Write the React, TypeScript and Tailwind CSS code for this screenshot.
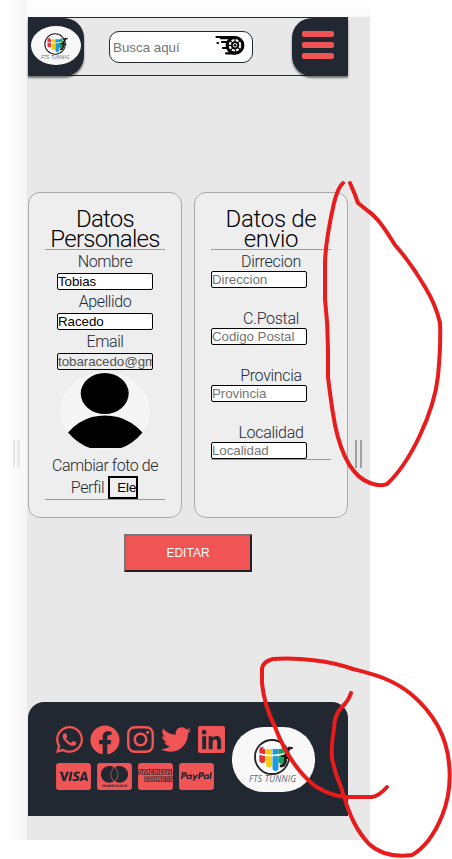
import React from "react";
import {
  FaWhatsapp,
  FaFacebook,
  FaInstagram,
  FaTwitter,
  FaLinkedin,
  FaCcVisa,
  FaCcMastercard,
  FaCcAmex,
  FaCcPaypal,
} from "react-icons/fa";

function LogoMark({ className }: { className: string }) {
  return (
    <svg viewBox="0 0 83 65" preserveAspectRatio="none" className={className}>
      <circle cx="40" cy="30" r="17" fill="#fff" stroke="#222" strokeWidth="1.8" />
      <g strokeWidth="6" strokeLinecap="round">
        <path d="M30.300 23v10" stroke="#e8303a" />
        <path d="M37 23v14.500" stroke="#f7cb15" />
        <path d="M43.500 23v18" stroke="#1e9be0" />
        <path d="M49.500 23v11" stroke="#17a05a" />
      </g>
      <path d="M31 22q1-3.500 5-3.500h9q5 0 5 3.500z" fill="#f3f8f8" />
      <path d="M27 27q12 3 25 0" stroke="#fff" strokeWidth="1.3" fill="none" />
      <path d="M57.500 21l-4 7v6q-1 5-4.500 5" stroke="#1b1b1b" strokeWidth="2.800" fill="none" strokeLinecap="round" />
      <path d="M50 29h5M54 22l6-1M54 31h4" stroke="#1b1b1b" strokeWidth="2.200" strokeLinecap="round" />
      <text x="40.500" y="55" textAnchor="middle" textLength="47" fontFamily="Open Sans, sans-serif" fontSize="8.500" fontStyle="italic" fill="#5b697b">
        FTS TUNNIG
      </text>
    </svg>
  );
}

function WheelIcon() {
  return (
    <svg viewBox="0 0 30 20" className="h-5 w-[30px]" fill="none" stroke="#000">
      <path d="M1.500 2h19M7 7h7M2.500 8h.5M8 13h6M11 18.300h9" strokeWidth="2.200" strokeLinecap="round" />
      <path d="M5 3.500h14" strokeWidth="1.500" />
      <circle cx="20" cy="10.300" r="8.300" strokeWidth="2.200" fill="#000" />
      <circle cx="20" cy="10.300" r="5.200" stroke="#fff" strokeWidth="2.200" strokeDasharray="2.900 1.180" />
      <circle cx="20" cy="10.300" r="1.800" stroke="#fff" strokeWidth="1" />
    </svg>
  );
}

const inputBase =
  "block h-[17px] w-24 rounded-[2px] border border-black p-0 font-['Liberation_Sans',Arial,sans-serif] text-[13.333px] leading-[15px] font-normal tracking-[-0.05px] placeholder:text-[#757575] placeholder:opacity-100";

function CardTitle({ children }: { children: React.ReactNode }) {
  return (
    <h2 className="h-10 text-center text-2xl leading-5 font-light tracking-[-0.75px] text-black">
      {children}
    </h2>
  );
}

function PersonalField({ label, value, muted }: { label: string; value: string; muted?: boolean }) {
  return (
    <div className="flex flex-col items-center">
      <label className="h-[23px] text-base leading-6 font-light tracking-[-0.4px]">{label}</label>
      <input
        readOnly
        value={value}
        className={`${inputBase} ${muted ? "bg-transparent text-[#545454]" : "bg-white text-black"}`}
      />
    </div>
  );
}

function ShippingField({ label, hint }: { label: string; hint: string }) {
  return (
    <div>
      <label className="block h-[21px] text-center text-base leading-6 font-light tracking-[-0.3px]">
        {label}
      </label>
      <input placeholder={hint} className={`${inputBase} bg-white`} />
    </div>
  );
}

export default function App() {
  return (
    <div className="relative h-[859px] w-[452px] overflow-hidden bg-white font-['Roboto','Liberation_Sans',sans-serif] text-[#222831]">
      <div className="flex h-[840px]">
        <div className="flex w-[27px] items-start justify-end gap-[2px] bg-linear-to-r from-white from-25% to-[#f5f5f5] pt-[440px] pr-[7px]">
          <i className="h-7 w-[2px] bg-[#e8e8e8]" />
          <i className="h-7 w-[3px] bg-[#e8e8e8]" />
        </div>
        <div className="w-[343px]">
          <div className="h-[17px] bg-linear-to-b from-white to-[#fafafa]" />
          <div className="flex h-[823px] bg-[#e8e8e8] pl-px">
            <div className="w-80">
              <header className="flex h-[59px] border-y border-[#222831]">
                <div className="flex h-[58px] w-14 items-center rounded-r-[20px] bg-[#222831] pl-[3px] shadow-[0_2px_2px_rgba(0,0,0,0.5)]">
                  <div className="mb-[3px] h-[39px] w-[50px] rounded-[50%] bg-[#f8f8f8]">
                    <LogoMark className="h-full w-full" />
                  </div>
                </div>
                <div className="mt-[13px] mr-auto ml-[25px] flex h-8 w-36 items-start rounded-[10px] border border-[#222831] bg-white">
                  <input
                    placeholder="Busca aquí"
                    className="h-[30px] w-[105px] bg-transparent pl-[3px] font-['Liberation_Sans',Arial,sans-serif] text-[13.333px] placeholder:text-[#757575] placeholder:opacity-100"
                  />
                  <div className="pt-[3px]">
                    <WheelIcon />
                  </div>
                </div>
                <div className="flex h-[58px] w-14 flex-col gap-[5px] rounded-l-[20px] bg-[#222831] pt-[13px] pl-[10px] shadow-[0_2px_2px_rgba(0,0,0,0.5)]">
                  <i className="h-[6px] w-8 rounded-[2px] bg-[#f05454]" />
                  <i className="h-[6px] w-8 rounded-[2px] bg-[#f05454]" />
                  <i className="h-[6px] w-8 rounded-[2px] bg-[#f05454]" />
                </div>
              </header>

              <main className="flex h-[626px] flex-col items-center pt-[116px]">
                <div className="flex w-full gap-3">
                  <section className="h-[326px] w-[154px] rounded-xl border border-[#aaa] bg-[#eee] px-4 pt-4">
                    <CardTitle>Datos Personales</CardTitle>
                    <div className="border-y border-[#999]">
                      <PersonalField label="Nombre" value="Tobias" />
                      <PersonalField label="Apellido" value="Racedo" />
                      <PersonalField label="Email" value="tobaracedo@gmail.com" muted />
                      <svg viewBox="0 0 90 78" className="mx-auto mt-[2px] block h-[78px] w-[90px]">
                        <ellipse cx="45" cy="39" rx="45" ry="39" fill="#f5f5f5" />
                        <ellipse cx="44.700" cy="21.500" rx="24" ry="20.500" fill="#000" />
                        <path d="M8 60.500Q18 49 32 45Q45 42 58 45Q72 49 82.500 60.500Q73 72 61 76H30Q18 72 8 60.500Z" fill="#000" />
                      </svg>
                      <div className="mt-[5px] h-[44px] text-center text-base leading-[22px] font-light tracking-[-0.45px]">
                        Cambiar foto de
                        <div className="flex items-start justify-center pr-px">
                          <span className="pr-1 leading-[22px]">Perfil</span>
                          <div className="-mt-px h-[23px] w-[30px] overflow-hidden border-2 border-black bg-[#efefef] pl-[7px] text-left font-['Liberation_Sans',Arial,sans-serif] text-[13.333px] leading-[19px] font-normal tracking-normal text-black">
                            Ele
                          </div>
                        </div>
                      </div>
                    </div>
                  </section>
                  <section className="h-[326px] w-[154px] rounded-xl border border-[#aaa] bg-[#eee] px-4 pt-4">
                    <CardTitle>
                      <span className="tracking-[-0.3px]">Datos de envio</span>
                    </CardTitle>
                    <div className="flex flex-col gap-[19px] border-y border-[#999]">
                      <ShippingField label="Dirrecion" hint="Direccion" />
                      <ShippingField label="C.Postal" hint="Codigo Postal" />
                      <ShippingField label="Provincia" hint="Provincia" />
                      <ShippingField label="Localidad" hint="Localidad" />
                    </div>
                  </section>
                </div>
                <button className="mt-4 h-[38px] w-32 border-2 border-t-[#767676] border-r-[#222] border-b-[#222] border-l-[#767676] bg-[#f05454] font-['Liberation_Sans',Arial,sans-serif] text-[12px] text-white">
                  EDITAR
                </button>
              </main>

              <footer className="flex h-[114px] rounded-t-[16px] bg-[#222831] pt-[22px] pl-7 text-[31px] text-[#f05454]">
                <div className="w-[176px]">
                  <div className="flex items-center gap-[7px]">
                    <FaWhatsapp className="h-[31px] w-[27px]" />
                    <FaFacebook className="h-[30px] w-[30px]" />
                    <FaInstagram className="h-[31px] w-[27px]" />
                    <FaTwitter className="h-[31px] w-[30px]" />
                    <FaLinkedin className="h-[31px] w-[27px]" />
                  </div>
                  <div className="mt-[6px] flex gap-[6px]">
                    <FaCcVisa className="h-[31px] w-[35px]" />
                    <FaCcMastercard className="h-[31px] w-[35px]" />
                    <FaCcAmex className="h-[31px] w-[35px]" />
                    <FaCcPaypal className="h-[31px] w-[35px]" />
                  </div>
                </div>
                <div className="mt-[3px] h-[65px] w-[83px] rounded-[32px] bg-[#f8f8f8]">
                  <LogoMark className="h-full w-full" />
                </div>
              </footer>
            </div>
            <div className="flex items-start gap-[3px] pt-[423px] pl-[7px]">
              <i className="h-7 w-[2px] bg-[#a0a0a0]" />
              <i className="h-7 w-[2px] bg-[#a0a0a0]" />
            </div>
          </div>
        </div>
      </div>

      {/* Freehand marker annotations over the page */}
      <svg
        viewBox="0 0 452 859"
        className="pointer-events-none absolute inset-0 h-full w-full"
        fill="none"
        stroke="#e81c1c"
        strokeWidth="4"
        strokeLinecap="round"
        strokeLinejoin="round"
      >
        <path d="M343 183Q338 187 334 203Q325 243 325 265V299Q328 324 328 350V377Q331 403 335 425C343 463 356 478 370 483Q381 487 387 484C410 463 434 413 438 376Q441 345 440 323Q436 305 425 287Q411 263 395 245C385 229 378 218 368 211Q363 207 358 203Q355 194 350 183" />
        <path d="M351 693Q349 700 342 707Q334 715 334 729Q331 746 332 758Q335 774 341 787C350 818 357 831 369 844C380 854 396 857 412 855Q430 845 442 816Q452 792 449 763C446 731 430 710 411 694C391 678 372 674 353 669C331 661 297 657 273 659Q264 661 262 668V683Q264 705 275 727C286 756 300 774 315 786Q331 796 346 797H372Q379 796 387 787" />
      </svg>
    </div>
  );
}
